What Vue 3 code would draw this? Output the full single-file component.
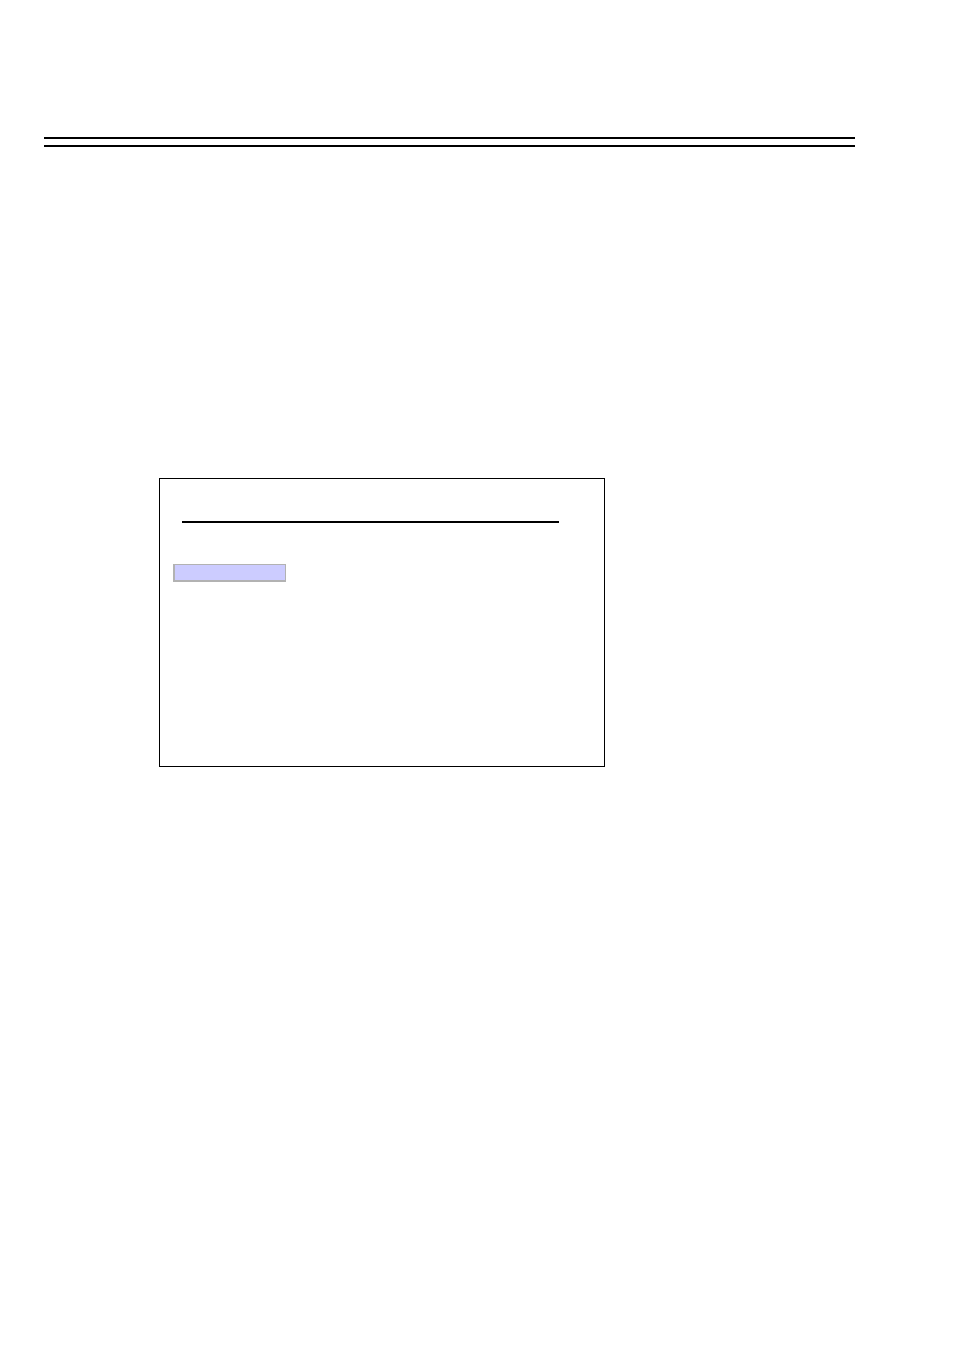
<template>
  <div class="page">
    <header class="page-header"></header>
    <main class="page-body">
      <section class="screen">
        <hr class="screen-rule" />
        <button
          class="screen-item"
          :class="{ 'is-selected': selected }"
          type="button"
          aria-label="Menu item"
          :aria-pressed="selected"
          @click="selected = !selected"
        ></button>
      </section>
    </main>
  </div>
</template>

<script setup>
import { ref } from 'vue'

const selected = ref(true)
</script>

<style>
body {
  margin: 0;
  background: #fff;
}
</style>

<style scoped>
.page {
  box-sizing: border-box;
  min-height: 100vh;
  padding: 137px 99px 137px 44px;
  font-family: "Liberation Sans", Arial, sans-serif;
}

/* double rule across the top of the page */
.page-header {
  height: 6px;
  border-top: 2px solid #000;
  border-bottom: 2px solid #000;
}

.page-body {
  padding: 331px 0 0 115px;
}

.screen {
  box-sizing: border-box;
  display: flex;
  flex-direction: column;
  align-items: flex-start;
  gap: 41px;
  max-width: 446px;
  padding: 42px 45px 184px 13px;
  border: 1px solid #000;
}

.screen-rule {
  align-self: stretch;
  height: 2px;
  margin: 0 0 0 9px;
  border: none;
  background: #000;
}

.screen-item {
  box-sizing: border-box;
  width: 113px;
  max-width: 100%;
  height: 18px;
  padding: 0;
  border: solid #b2b2b2;
  border-width: 1px 1px 2px 2px;
  border-radius: 0;
  background: #fff;
  cursor: pointer;
}

.screen-item.is-selected {
  background: #ccf;
}
</style>
